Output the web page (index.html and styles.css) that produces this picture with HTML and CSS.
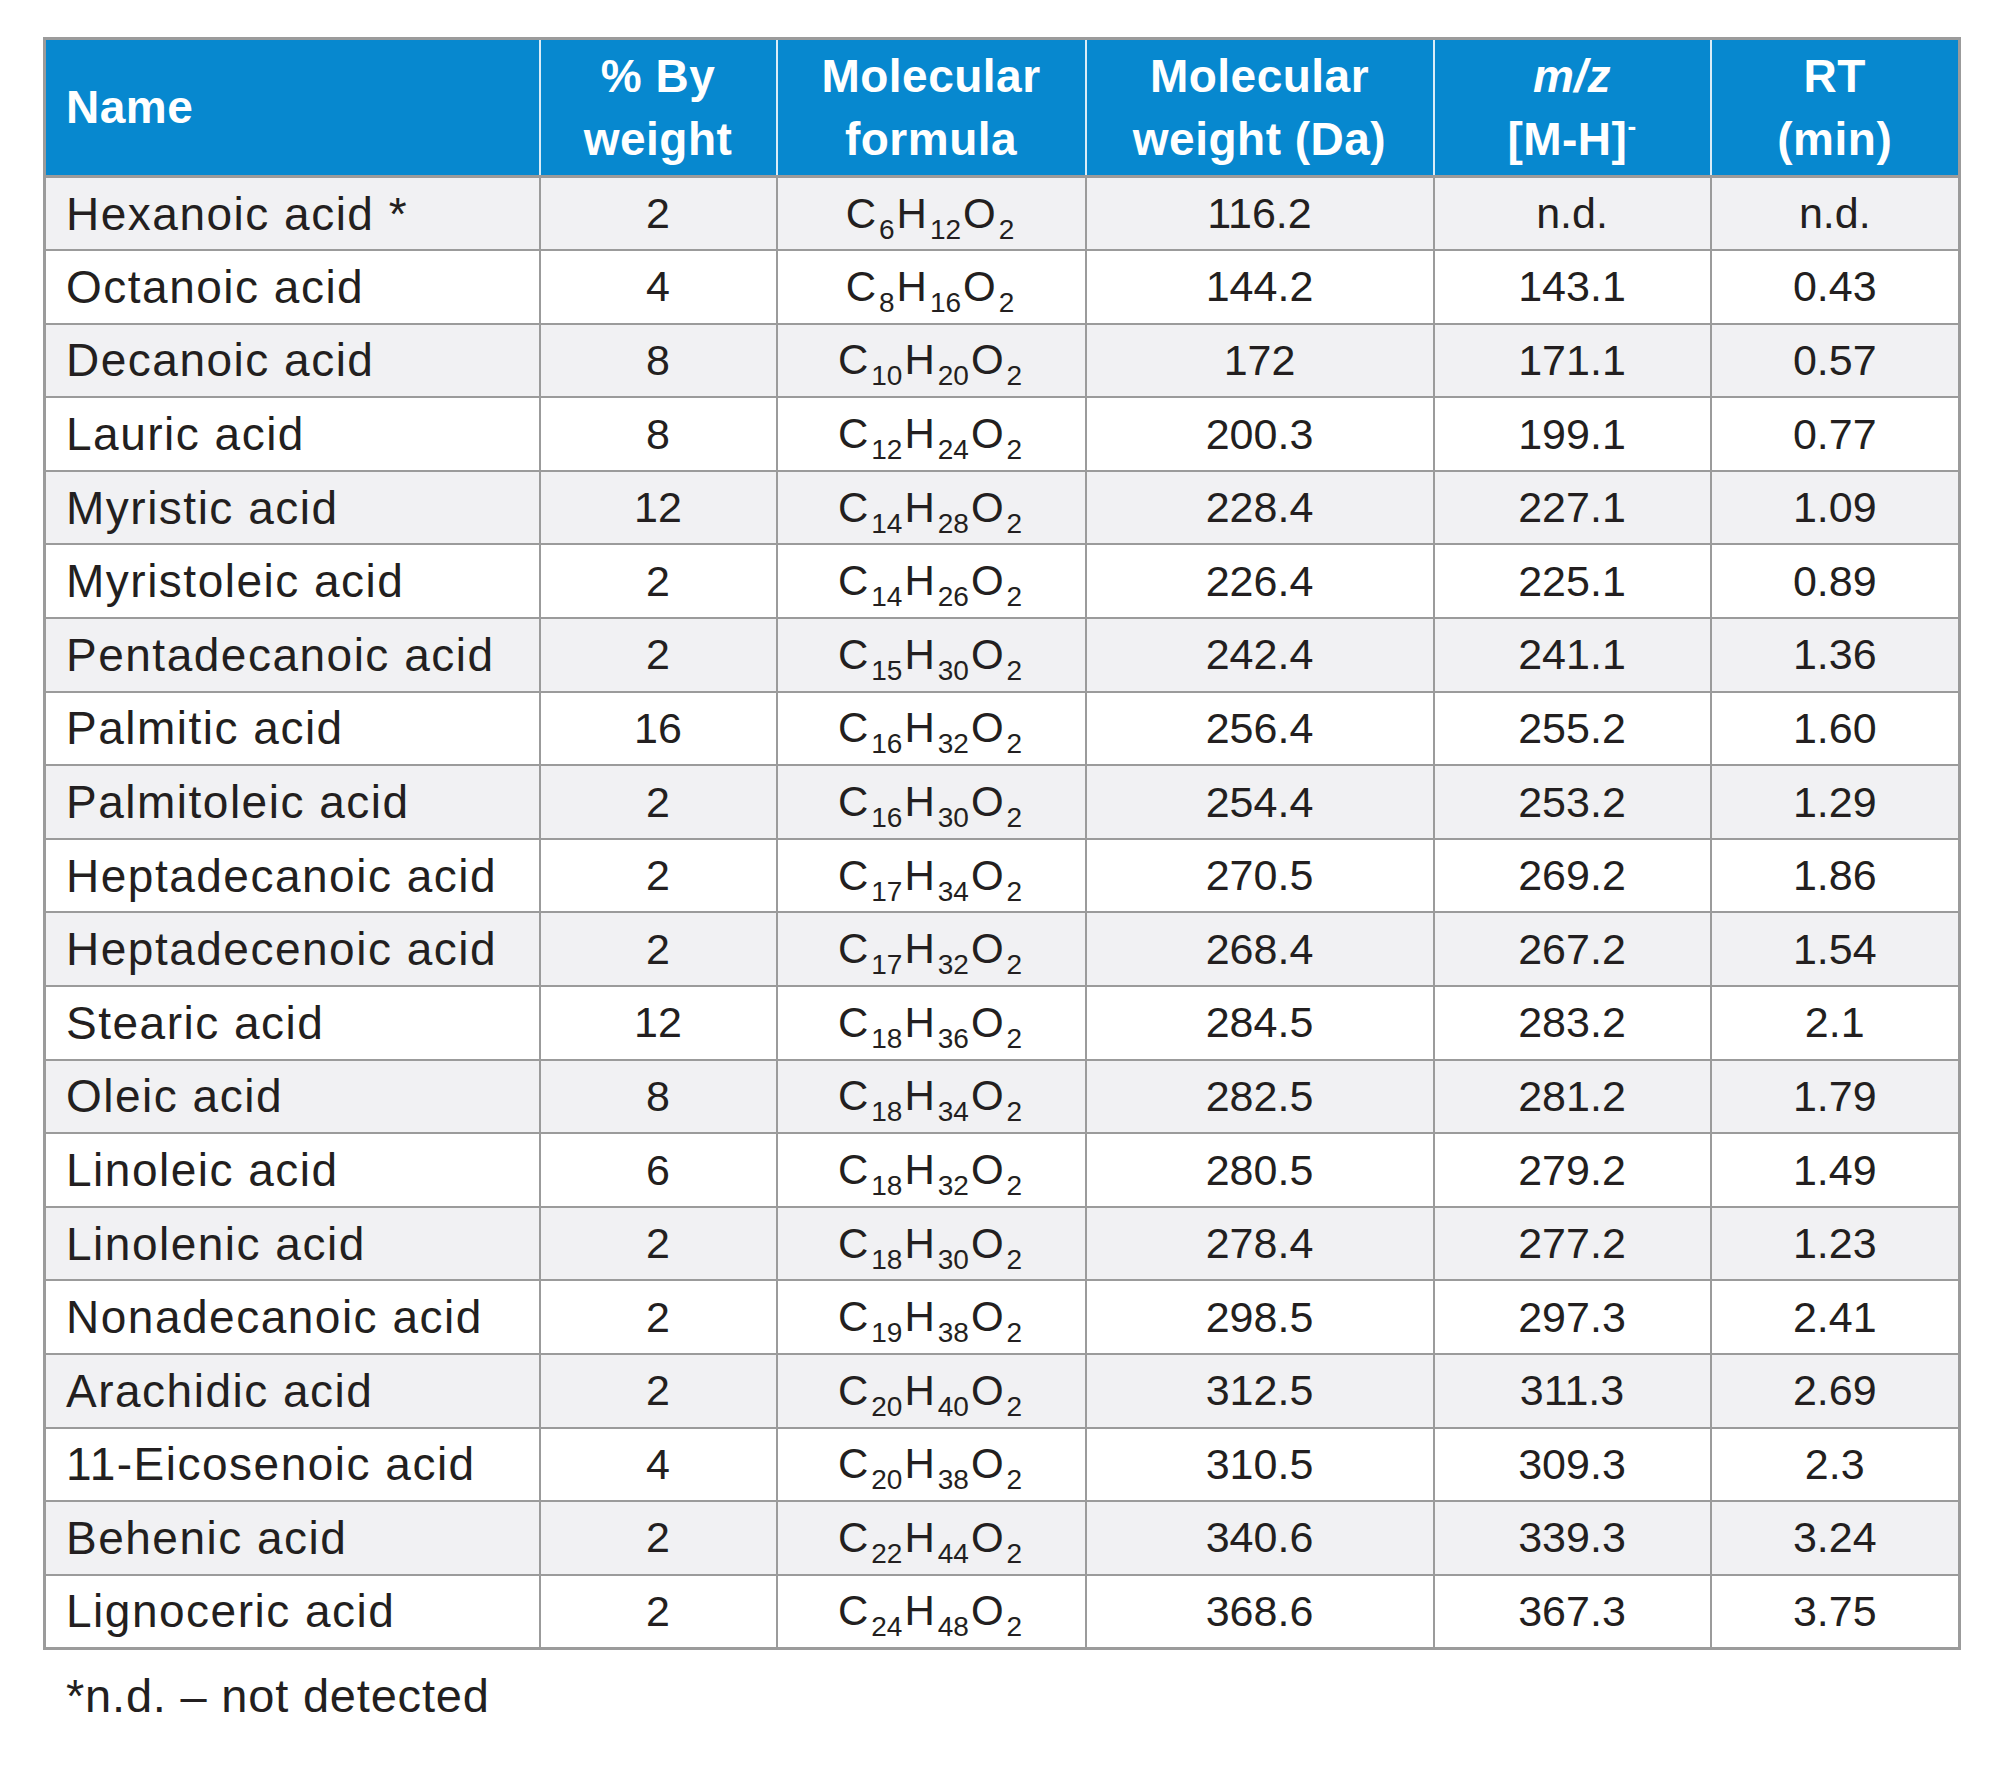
FILE: index.html
```html
<!DOCTYPE html>
<html lang="en">
<head>
<meta charset="utf-8">
<title>Fatty acid standards</title>
<link rel="stylesheet" href="styles.css">
</head>
<body>
<div class="page">
<table class="fa-table">
<colgroup>
<col class="c-name"><col class="c-pct"><col class="c-form"><col class="c-mw"><col class="c-mz"><col class="c-rt">
</colgroup>
<thead>
<tr>
<th class="name">Name</th>
<th>% By<br>weight</th>
<th>Molecular<br>formula</th>
<th>Molecular<br>weight (Da)</th>
<th><i>m/z</i><br>[M-H]<sup>-</sup></th>
<th>RT<br>(min)</th>
</tr>
</thead>
<tbody>
<tr><td class="name">Hexanoic acid *</td><td>2</td><td class="f">C<sub>6</sub>H<sub>12</sub>O<sub>2</sub></td><td>116.2</td><td>n.d.</td><td>n.d.</td></tr>
<tr><td class="name">Octanoic acid</td><td>4</td><td class="f">C<sub>8</sub>H<sub>16</sub>O<sub>2</sub></td><td>144.2</td><td>143.1</td><td>0.43</td></tr>
<tr><td class="name">Decanoic acid</td><td>8</td><td class="f">C<sub>10</sub>H<sub>20</sub>O<sub>2</sub></td><td>172</td><td>171.1</td><td>0.57</td></tr>
<tr><td class="name">Lauric acid</td><td>8</td><td class="f">C<sub>12</sub>H<sub>24</sub>O<sub>2</sub></td><td>200.3</td><td>199.1</td><td>0.77</td></tr>
<tr><td class="name">Myristic acid</td><td>12</td><td class="f">C<sub>14</sub>H<sub>28</sub>O<sub>2</sub></td><td>228.4</td><td>227.1</td><td>1.09</td></tr>
<tr><td class="name">Myristoleic acid</td><td>2</td><td class="f">C<sub>14</sub>H<sub>26</sub>O<sub>2</sub></td><td>226.4</td><td>225.1</td><td>0.89</td></tr>
<tr><td class="name">Pentadecanoic acid</td><td>2</td><td class="f">C<sub>15</sub>H<sub>30</sub>O<sub>2</sub></td><td>242.4</td><td>241.1</td><td>1.36</td></tr>
<tr><td class="name">Palmitic acid</td><td>16</td><td class="f">C<sub>16</sub>H<sub>32</sub>O<sub>2</sub></td><td>256.4</td><td>255.2</td><td>1.60</td></tr>
<tr><td class="name">Palmitoleic acid</td><td>2</td><td class="f">C<sub>16</sub>H<sub>30</sub>O<sub>2</sub></td><td>254.4</td><td>253.2</td><td>1.29</td></tr>
<tr><td class="name">Heptadecanoic acid</td><td>2</td><td class="f">C<sub>17</sub>H<sub>34</sub>O<sub>2</sub></td><td>270.5</td><td>269.2</td><td>1.86</td></tr>
<tr><td class="name">Heptadecenoic acid</td><td>2</td><td class="f">C<sub>17</sub>H<sub>32</sub>O<sub>2</sub></td><td>268.4</td><td>267.2</td><td>1.54</td></tr>
<tr><td class="name">Stearic acid</td><td>12</td><td class="f">C<sub>18</sub>H<sub>36</sub>O<sub>2</sub></td><td>284.5</td><td>283.2</td><td>2.1</td></tr>
<tr><td class="name">Oleic acid</td><td>8</td><td class="f">C<sub>18</sub>H<sub>34</sub>O<sub>2</sub></td><td>282.5</td><td>281.2</td><td>1.79</td></tr>
<tr><td class="name">Linoleic acid</td><td>6</td><td class="f">C<sub>18</sub>H<sub>32</sub>O<sub>2</sub></td><td>280.5</td><td>279.2</td><td>1.49</td></tr>
<tr><td class="name">Linolenic acid</td><td>2</td><td class="f">C<sub>18</sub>H<sub>30</sub>O<sub>2</sub></td><td>278.4</td><td>277.2</td><td>1.23</td></tr>
<tr><td class="name">Nonadecanoic acid</td><td>2</td><td class="f">C<sub>19</sub>H<sub>38</sub>O<sub>2</sub></td><td>298.5</td><td>297.3</td><td>2.41</td></tr>
<tr><td class="name">Arachidic acid</td><td>2</td><td class="f">C<sub>20</sub>H<sub>40</sub>O<sub>2</sub></td><td>312.5</td><td>311.3</td><td>2.69</td></tr>
<tr><td class="name">11-Eicosenoic acid</td><td>4</td><td class="f">C<sub>20</sub>H<sub>38</sub>O<sub>2</sub></td><td>310.5</td><td>309.3</td><td>2.3</td></tr>
<tr><td class="name">Behenic acid</td><td>2</td><td class="f">C<sub>22</sub>H<sub>44</sub>O<sub>2</sub></td><td>340.6</td><td>339.3</td><td>3.24</td></tr>
<tr><td class="name">Lignoceric acid</td><td>2</td><td class="f">C<sub>24</sub>H<sub>48</sub>O<sub>2</sub></td><td>368.6</td><td>367.3</td><td>3.75</td></tr>
</tbody>
</table>
<p class="note">*n.d. – not detected</p>
</div>
</body>
</html>
```
FILE: styles.css
```css
html, body {
  margin: 0;
  padding: 0;
  background: #ffffff;
}
body {
  font-family: "Liberation Sans", Arial, sans-serif;
  color: #231f20;
}
.page {
  padding: 37px 0 0 43px;
}
.fa-table {
  border-collapse: collapse;
  table-layout: fixed;
  width: 1915px;
  border: 3px solid #9b9b9b;
}
.c-name { width: 495px; }
.c-pct { width: 237px; }
.c-form { width: 309px; }
.c-mw { width: 348px; }
.c-mz { width: 277px; }
.c-rt { width: 249px; }

.fa-table th {
  background: #0788cf;
  color: #ffffff;
  font-weight: bold;
  font-size: 46px;
  line-height: 63px;
  letter-spacing: 0.5px;
  height: 138px;
  padding: 0 8px;
  text-align: center;
  vertical-align: middle;
  border-left: 2px solid #d9ecf7;
  border-bottom: 3px solid #9b9b9b;
  box-sizing: border-box;
}
.fa-table th:first-child {
  border-left: 3px solid #9b9b9b;
}
.fa-table th.name {
  text-align: left;
  padding-left: 20px;
}
.fa-table th sup {
  font-size: 26px;
  line-height: 0;
  vertical-align: 20px;
}
.fa-table td {
  height: 73.6px;
  padding: 0 8px;
  font-size: 43px;
  text-align: center;
  vertical-align: middle;
  border: 2px solid #9b9b9b;
  box-sizing: border-box;
  white-space: nowrap;
}
.fa-table td.name {
  text-align: left;
  padding-left: 20px;
  font-size: 46px;
  letter-spacing: 1.5px;
}
.fa-table td.f {
  font-size: 42px;
  letter-spacing: 2px;
}
.fa-table td.f sub {
  font-size: 28px;
  line-height: 0;
  vertical-align: -11px;
  letter-spacing: 0;
  margin: 0 2px 0 1px;
}
.fa-table tbody tr:nth-child(odd) td {
  background: #f1f1f3;
}
.note {
  margin: 18px 0 0 23px;
  font-size: 47px;
  line-height: 56px;
  letter-spacing: 0.8px;
}
```
